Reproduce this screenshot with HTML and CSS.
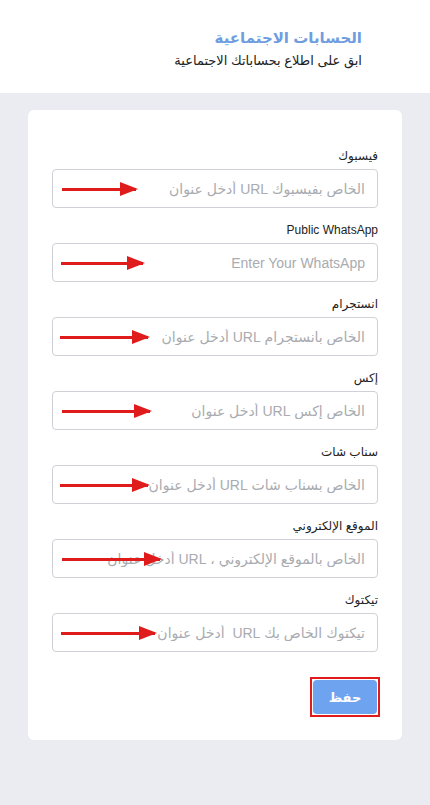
FILE: index.html
```html
<!DOCTYPE html>
<html lang="ar" dir="rtl">
<head>
  <meta charset="UTF-8">
  <meta name="viewport" content="width=device-width, initial-scale=1.0">
  <title>الحسابات الاجتماعية</title>
  <link rel="stylesheet" href="styles.css">
</head>
<body>

  <div class="page-header">
    <h1 class="page-title">الحسابات الاجتماعية</h1>
    <p class="page-subtitle">ابق على اطلاع بحساباتك الاجتماعية</p>
  </div>

  <div class="card">
    <form class="social-form">
      <div class="field">
        <label>فيسبوك</label>
        <div class="input-wrap">
          <input type="text" placeholder="الخاص بفيسبوك URL أدخل عنوان">
          <span class="arrow" style="left: 10px; width: 74px;"></span>
        </div>
      </div>

      <div class="field">
        <label>Public WhatsApp</label>
        <div class="input-wrap">
          <input type="text" placeholder="Enter Your WhatsApp">
          <span class="arrow" style="left: 9px; width: 82px;"></span>
        </div>
      </div>

      <div class="field">
        <label>انستجرام</label>
        <div class="input-wrap">
          <input type="text" placeholder="الخاص بانستجرام URL أدخل عنوان">
          <span class="arrow" style="left: 8px; width: 88px;"></span>
        </div>
      </div>

      <div class="field">
        <label>إكس</label>
        <div class="input-wrap">
          <input type="text" placeholder="الخاص إكس URL أدخل عنوان">
          <span class="arrow" style="left: 10px; width: 88px;"></span>
        </div>
      </div>

      <div class="field">
        <label>سناب شات</label>
        <div class="input-wrap">
          <input type="text" placeholder="الخاص بسناب شات URL أدخل عنوان">
          <span class="arrow" style="left: 8px; width: 88px;"></span>
        </div>
      </div>

      <div class="field">
        <label>الموقع الإلكتروني</label>
        <div class="input-wrap">
          <input type="text" placeholder="الخاص بالموقع الإلكتروني ، URL أدخل عنوان">
          <span class="arrow" style="left: 10px; width: 98px;"></span>
        </div>
      </div>

      <div class="field">
        <label>تيكتوك</label>
        <div class="input-wrap">
          <input type="text" placeholder="تيكتوك الخاص بك URL  أدخل عنوان">
          <span class="arrow" style="left: 9px; width: 94px;"></span>
        </div>
      </div>

      <div class="actions">
        <div class="save-outline">
          <button type="button" class="save-btn">حفظ</button>
        </div>
      </div>
    </form>
  </div>

</body>
</html>
```

FILE: styles.css
```css
body {
  margin: 0;
  background-color: #ebecf1;
  font-family: "Liberation Sans", "DejaVu Sans", sans-serif;
  color: #333;
}

.page-header {
  background-color: #fff;
  height: 93px;
  padding: 28px 68px 0 0;
  box-sizing: border-box;
}

.page-title {
  margin: 0;
  font-size: 15px;
  font-weight: bold;
  color: #6f9de0;
  line-height: 20px;
}

.page-subtitle {
  margin: 4px 0 0;
  font-size: 13px;
  color: #222;
  line-height: 18px;
}

.card {
  background-color: #fff;
  margin: 17px 28px 0;
  border-radius: 6px;
  padding: 38px 24px 24px;
  height: 630px;
  box-sizing: border-box;
}

.social-form {
  display: flex;
  flex-direction: column;
  gap: 14px;
}

.field {
  display: flex;
  flex-direction: column;
  gap: 5px;
}

.field label {
  font-size: 12px;
  line-height: 16px;
  color: #222;
}

.input-wrap {
  position: relative;
}

.input-wrap input {
  width: 100%;
  height: 39px;
  box-sizing: border-box;
  border: 1px solid #cfd1d6;
  border-radius: 4px;
  padding: 0 12px;
  font-family: inherit;
  font-size: 14px;
  outline: none;
}

.input-wrap input::placeholder {
  color: #a9abb0;
}

.arrow {
  position: absolute;
  top: 50%;
  height: 3px;
  margin-top: -1px;
  background-color: #e01b1b;
}

.arrow::after {
  content: "";
  position: absolute;
  right: -2px;
  top: -6px;
  border-left: 18px solid #e01b1b;
  border-top: 7px solid transparent;
  border-bottom: 7px solid transparent;
}

.actions {
  display: flex;
  justify-content: flex-start;
  margin-top: 11px;
}

.save-outline {
  border: 2px solid #e01b1b;
  padding: 1px;
  margin-right: -2px;
}

.save-btn {
  background-color: #6ea3ef;
  color: #fff;
  font-family: inherit;
  font-weight: bold;
  font-size: 13px;
  border: none;
  border-radius: 4px;
  width: 64px;
  height: 34px;
  cursor: pointer;
}
```
